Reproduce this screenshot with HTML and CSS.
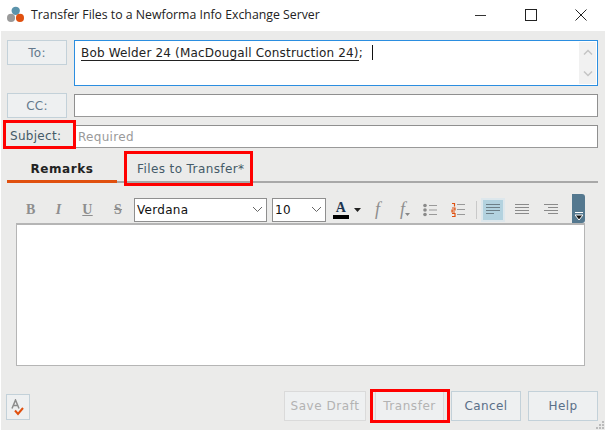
FILE: index.html
```html
<!DOCTYPE html>
<html lang="en">
<head>
<meta charset="utf-8">
<title>Transfer Files</title>
<link rel="stylesheet" href="styles.css">
</head>
<body>
<div class="window">
  <header class="titlebar">
    <svg class="logo" width="17" height="17" viewBox="0 0 16 16"><circle cx="8.200" cy="4.500" r="3.900" fill="#5b93ab"/><circle cx="3.800" cy="11.200" r="3.800" fill="#9a9a9a"/><circle cx="12.200" cy="11.200" r="3.800" fill="#e0500f"/></svg>
    <span class="title">Transfer Files to a Newforma Info Exchange Server</span>
    <div class="winctl">
      <svg width="12" height="12" viewBox="0 0 12 12"><path d="M0 6.500h11" stroke="#333" fill="none"/></svg>
      <svg width="12" height="12" viewBox="0 0 12 12"><rect x=".5" y=".5" width="11" height="11" stroke="#222" fill="none"/></svg>
      <svg width="12" height="12" viewBox="0 0 12 12"><path d="M.5.5l11 11M11.500.5l-11 11" stroke="#222" fill="none"/></svg>
    </div>
  </header>
  <main class="client">
    <div class="row to-row">
      <button class="label-btn">To:</button>
      <div class="field to-field">
        <span class="recipient">Bob Welder 24 (MacDougall Construction 24)</span><span class="semi">; </span><span class="caret"></span>
        <div class="vscroll">
          <svg width="10" height="7" viewBox="0 0 10 7"><path d="M1 5.500l4-4 4 4" stroke="#c4c4c4" stroke-width="1.500" fill="none"/></svg>
          <svg width="10" height="7" viewBox="0 0 10 7"><path d="M1 1.500l4 4 4-4" stroke="#c4c4c4" stroke-width="1.500" fill="none"/></svg>
        </div>
      </div>
    </div>
    <div class="row cc-row">
      <button class="label-btn">CC:</button>
      <div class="field plain"></div>
    </div>
    <div class="row subject-row">
      <span class="subject-label">Subject:</span>
      <div class="field plain placeholder">Required</div>
    </div>
    <nav class="tabs">
      <span class="tab active">Remarks</span>
      <span class="tab">Files to Transfer*</span>
    </nav>
    <div class="toolbar">
      <span class="fmt serif b">B</span>
      <span class="fmt serif i">I</span>
      <span class="fmt serif u">U</span>
      <span class="fmt serif s">S</span>
      <div class="select font-select"><span>Verdana</span><svg width="11" height="7" viewBox="0 0 11 7"><path d="M1 1l4.500 4.500L10 1" stroke="#666" fill="none"/></svg></div>
      <div class="select size-select"><span>10</span><svg width="11" height="7" viewBox="0 0 11 7"><path d="M1 1l4.500 4.500L10 1" stroke="#666" fill="none"/></svg></div>
      <div class="color-btn"><span class="color-a">A</span><span class="color-bar"></span></div>
      <svg class="drop" width="7" height="4" viewBox="0 0 7 4"><path d="M0 0h7L3.500 4z" fill="#222"/></svg>
      <span class="fn serif">f</span>
      <span class="fn fn2 serif">f<svg width="5" height="3" viewBox="0 0 5 3"><path d="M0 0h5L2.500 3z" fill="#888"/></svg></span>
      <svg class="ic list1" width="14" height="14" viewBox="0 0 14 14"><g fill="#8a8a8a"><circle cx="2" cy="2.500" r="1.800"/><circle cx="2" cy="7" r="1.800"/><circle cx="2" cy="11.500" r="1.800"/></g><path d="M6 2.500h8M6 7h8M6 11.500h8" stroke="#999"/></svg>
      <svg class="ic list2" width="14" height="15" viewBox="0 0 14 15"><path d="M1 1.500h2.500v3M1 6h3v2H1v2h3M1 11.500h3v3H1" stroke="#e0500f" fill="none" stroke-width="1.200"/><path d="M6 2.500h8M6 7.500h8M6 12.500h8" stroke="#999"/></svg>
      <span class="sep"></span>
      <span class="align active-align"><svg width="14" height="13" viewBox="0 0 14 13"><path d="M0 1.500h14M0 4.500h14M0 7.500h14M0 10.500h8" stroke="#6d7f88"/></svg></span>
      <span class="align"><svg width="14" height="13" viewBox="0 0 14 13"><path d="M0 1.500h14M0 4.500h14M0 7.500h14M0 10.500h14" stroke="#8a8a8a"/></svg></span>
      <span class="align"><svg width="14" height="13" viewBox="0 0 14 13"><path d="M0 1.500h14M4 4.500h10M0 7.500h14M4 10.500h10" stroke="#8a8a8a"/></svg></span>
      <div class="overflow"><svg width="8" height="9" viewBox="0 0 8 9"><path d="M0 .5h8M0 3h8L4 8z" stroke="#fff" fill="#111"/></svg></div>
    </div>
    <div class="editor"></div>
    <footer class="footer">
      <button class="spell"><svg width="14" height="17" viewBox="0 0 14 17"><path d="M1 9.500L4.500 1 8 9.500M2.500 6.500h4" stroke="#8c8c8c" stroke-width="1.500" fill="none"/><path d="M4 11.500l3 3.500 5-6" stroke="#e0500f" stroke-width="2" fill="none"/></svg></button>
      <div class="actions">
        <button class="btn off draft">Save Draft</button>
        <button class="btn off transfer">Transfer</button>
        <button class="btn cancel">Cancel</button>
        <button class="btn help">Help</button>
      </div>
    </footer>
    <div class="hl hl-subject"></div>
    <div class="hl hl-files"></div>
    <div class="hl hl-transfer"></div>
    <svg class="grip" width="8" height="8" viewBox="0 0 8 8"><path d="M6 0h2v2H6zM6 3h2v2H6zM3 3h2v2H3zM6 6h2v2H6zM3 6h2v2H3zM0 6h2v2H0z" fill="#bbb"/></svg>
  </main>
</div>
</body>
</html>
```
FILE: styles.css
```css
* { box-sizing: border-box; }
html, body { margin: 0; padding: 0; background: #fff; }
.window { width: 606px; height: 430px; display: flex; flex-direction: column; font-family: "DejaVu Sans", Verdana, sans-serif; font-size: 12px; letter-spacing: 0.3px; overflow: hidden; }
.titlebar { height: 31px; display: flex; align-items: center; padding: 0 0 2px 7px; background: #fff; }
.logo { flex: none; }
.title { margin-left: 7px; font: 12.300px/16px "Open Sans", sans-serif; letter-spacing: 0; color: #222; }
.winctl { margin-left: auto; display: flex; gap: 38px; padding-right: 19px; }
.client { position: relative; flex: 1; margin-left: 1px; width: 604px; background: #ebebea; padding: 9px 7px 0 6px; }
.row { display: flex; gap: 7px; }
.label-btn { width: 60px; height: 25px; flex: none; padding: 0; background: #eef0f1; border: 1px solid #c3d1d9; color: #64798c; font: 12px "DejaVu Sans", sans-serif; letter-spacing: 0.3px; }
.field { flex: 1; background: #fff; border: 1px solid #8f8f8f; border-bottom-color: #999; }
.to-row { height: 46px; }
.to-field { position: relative; border: 1px solid #2b8ee0; padding: 4px 6px; line-height: 15px; color: #222; white-space: nowrap; letter-spacing: 0.17px; }
.recipient { border-bottom: 1px solid #222; display: inline-block; line-height: 14px; }
.caret { display: inline-block; width: 1px; height: 15px; margin-left: 5px; background: #111; vertical-align: -3px; }
.vscroll { position: absolute; right: 1px; top: 1px; bottom: 1px; width: 17px; background: #f1f1f1; display: flex; flex-direction: column; justify-content: space-between; align-items: center; padding: 7px 0; }
.cc-row { margin-top: 7px; height: 24px; }
.plain { height: 23px; margin-top: 1px; }
.subject-row { margin-top: 7px; height: 24px; }
.subject-label { width: 60px; flex: none; padding: 5px 0 0 3px; color: #445a68; }
.placeholder { color: #9a9a9a; padding: 4px 3px; line-height: 15px; }
.tabs { margin-top: 9px; height: 26px; display: flex; border-bottom: 2px solid #a8a8a8; }
.tab { padding: 4px 0 0 0; height: 26px; text-align: center; color: #445a68; line-height: 16px; }
.active { width: 110px; font-weight: 700; color: #222; border-bottom: 3px solid #e0500f; letter-spacing: 0.55px; }
.tab:not(.active) { margin-left: 8px; width: 126px; text-align: left; padding-left: 12px; letter-spacing: 0.4px; }
.toolbar { margin: 13px 13px 0 10px; height: 27px; display: flex; align-items: center; position: relative; }
.serif { font-family: "Liberation Serif", serif; color: #8e8e8e; }
.fmt { width: 29px; flex: none; font-size: 14px; font-weight: 700; text-align: center; }
.fmt.b { width: 27px; text-align: left; padding-left: 9px; }
.fmt.i { font-style: italic; }
.fmt.u { text-decoration: underline; }
.fmt.s { text-decoration: line-through; width: 32px; }
.select { height: 24px; background: #fff; border: 1px solid #8f8f8f; display: flex; align-items: center; justify-content: space-between; padding: 0 3px 0 2px; color: #111; flex: none; }
.font-select { width: 133px; }
.size-select { width: 54px; margin-left: 5px; }
.color-btn { width: 16px; margin-left: 7px; display: flex; flex-direction: column; align-items: center; flex: none; }
.color-a { font: 700 14px/14px "Liberation Serif", serif; color: #1d3550; }
.color-bar { width: 16px; height: 4px; background: #000; }
.drop { margin-left: 5px; flex: none; }
.fn { width: 14px; margin-left: 14px; font-size: 18px; font-style: italic; flex: none; }
.fn2 { margin-left: 11px; width: 18px; display: flex; align-items: flex-end; }
.fn2 svg { margin-bottom: 4px; }
.list1 { margin-left: 5px; flex: none; }
.list2 { margin-left: 14px; flex: none; }
.sep { width: 1px; height: 18px; background: #c9c9c9; margin-left: 11px; flex: none; }
.align { width: 24px; height: 24px; margin-left: 5px; flex: none; display: flex; align-items: center; justify-content: center; }
.active-align { background: #b3d2df; border: 2px solid #dde7ec; margin-left: 4px; }
.overflow { position: absolute; right: 0; top: -2px; width: 13px; height: 29px; background: #54788f; border-radius: 0 3px 3px 0; display: flex; align-items: flex-end; justify-content: center; padding-bottom: 2px; }
.editor { margin: 0 13px 0 9px; height: 143px; background: #fff; border: 1px solid #b5b5b5; border-width: 2px 1px 1px 1px; }
.footer { margin-top: 25px; display: flex; align-items: flex-start; justify-content: space-between; }
.spell { margin-top: 3px; margin-left: -1px; width: 24px; height: 26px; padding: 0; background: #eef0f1; border: 1px solid #c3d1d9; display: flex; align-items: center; justify-content: center; }
.actions { display: flex; gap: 7px; }
.btn { height: 30px; padding: 0; background: #eef0f1; border: 1px solid #c3d1d9; color: #5a6f88; font: 12px "DejaVu Sans", sans-serif; letter-spacing: 0.4px; }
.off { color: #b3b3b3; border-color: #dadada; letter-spacing: 0.55px; }
.draft { width: 82px; margin-right: 2px; }
.transfer { width: 69px; }
.cancel { width: 70px; }
.help { width: 70px; }
.hl { position: absolute; border: 3px solid #f00; pointer-events: none; }
.hl-subject { left: 2px; top: 89px; width: 73px; height: 29px; }
.hl-files { left: 123px; top: 120px; width: 129px; height: 35px; }
.hl-transfer { left: 369px; top: 358px; width: 80px; height: 34px; }
.grip { position: absolute; right: 1px; bottom: 1px; }
```
